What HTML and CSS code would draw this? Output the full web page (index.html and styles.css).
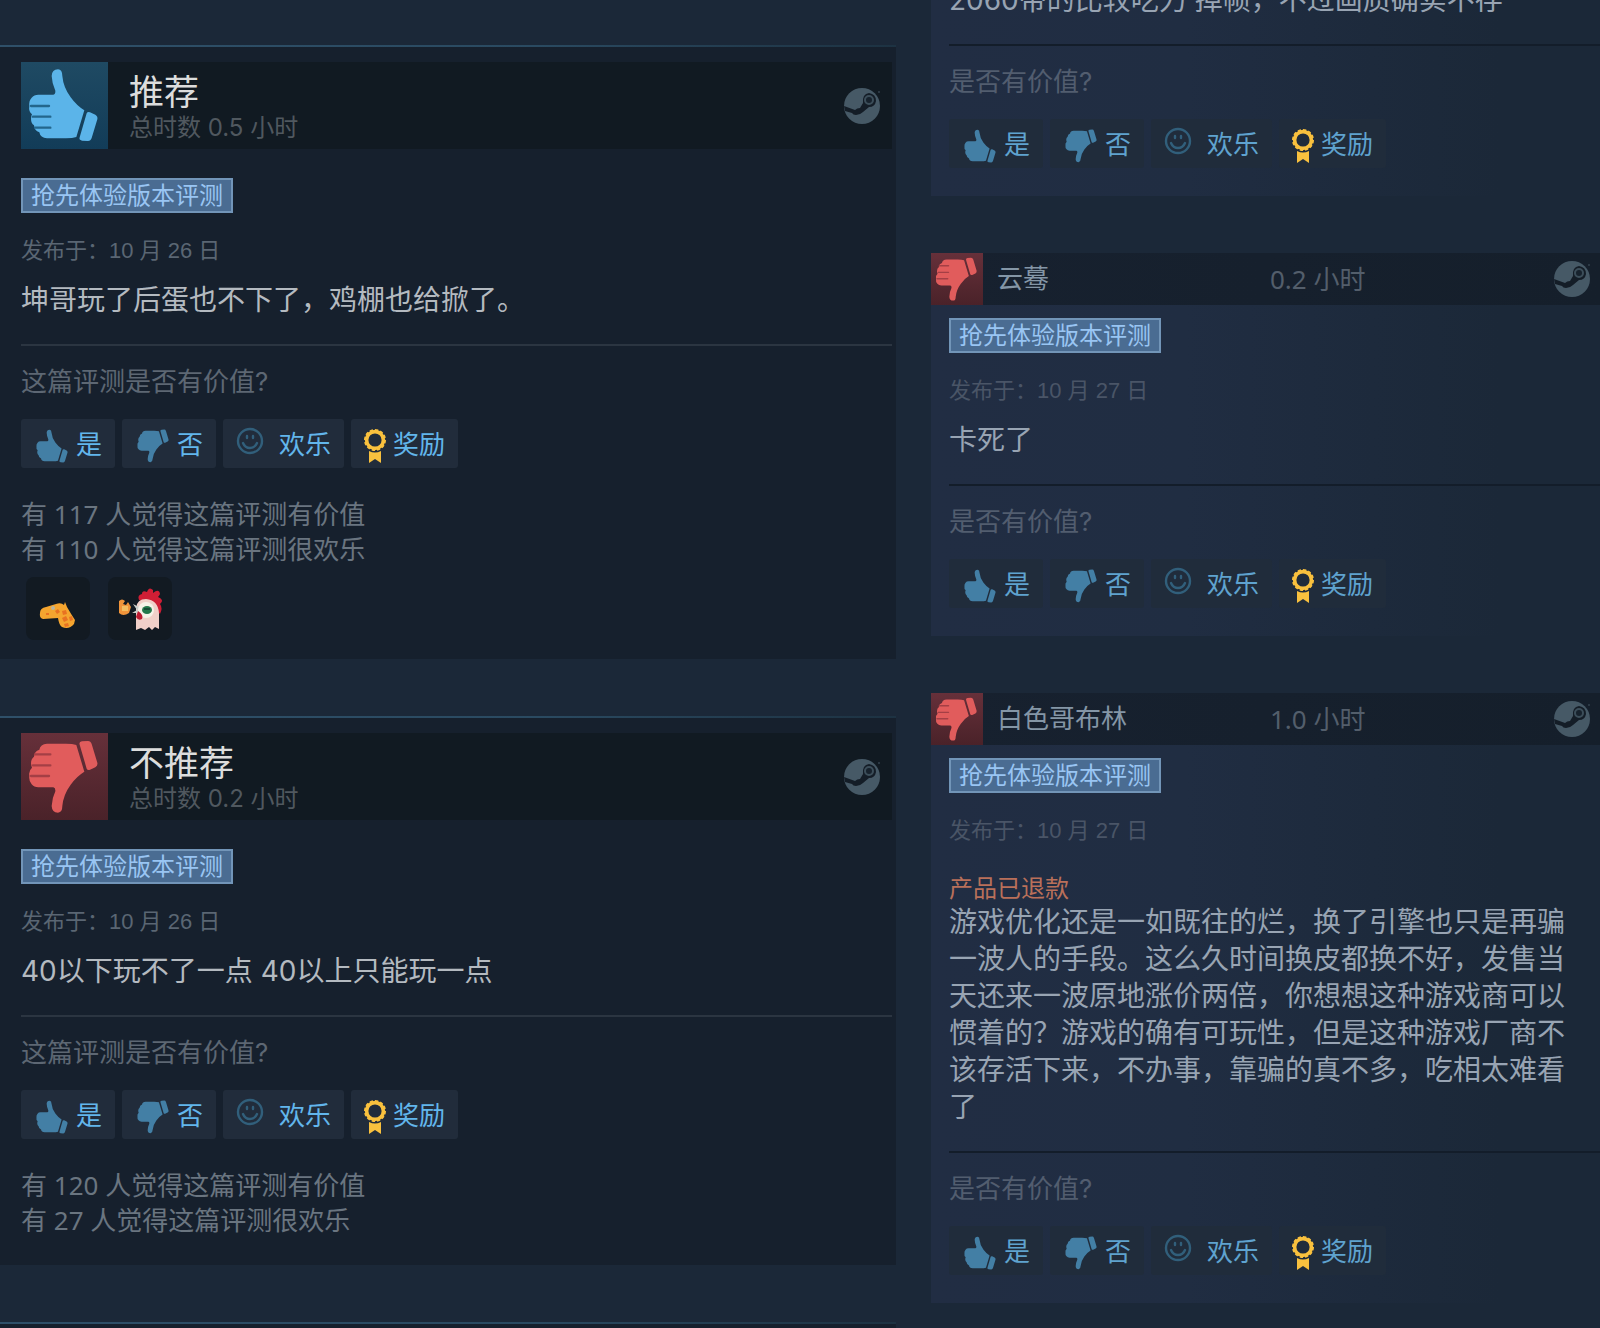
FILE: index.html
```html
<!DOCTYPE html>
<html lang="zh-CN">
<head>
<meta charset="utf-8">
<meta name="viewport" content="width=device-width, initial-scale=1">
<title>用户评测</title>
<link rel="stylesheet" href="styles.css">
</head>
<body>
<svg class="sprite" aria-hidden="true">
  <defs>
    <g id="hand">
      <path d="M92 42Q93 22 111 22Q124 23 124 42Q127 76 149 106Q167 131 190 145L166 225Q155 229 135 229L78 229Q58 228 55 211Q40 206 39 190Q30 184 30 170Q31 160 33 157Q22 148 25 132Q23 116 32 107Q39 98 52 98L97 98Q104 96 103 86Q93 65 92 42Z"/>
      <path d="M197 154Q200 148 207 151L223 158Q231 163 229 172L212 228Q209 237 201 237L183 236Q173 234 176 226Z"/>
      <path class="slit" d="M30 132H84M36 164H88M42 197H88"/>
    </g>
    <symbol id="thumb-up" viewBox="0 0 261 261"><use href="#hand"/></symbol>
    <symbol id="thumb-down" viewBox="0 0 261 261"><use href="#hand" transform="matrix(1 0 0 -1 0 261)"/></symbol>
    <symbol id="small-up" viewBox="22 18 210 222"><use href="#hand"/></symbol>
    <symbol id="small-down" viewBox="22 21 210 222"><use href="#hand" transform="matrix(1 0 0 -1 0 261)"/></symbol>
    <symbol id="smile" viewBox="0 0 28 28">
      <g fill="none" stroke="currentColor" stroke-width="2.4" stroke-linecap="round">
        <circle cx="14" cy="14" r="12"/>
        <path d="M7 16Q9 21 14 21Q19 21 21 16M11 9V11M17 9V11"/>
      </g>
    </symbol>
    <symbol id="medal" viewBox="0 0 24 36">
      <circle cx="12" cy="12" r="8.4" fill="none" stroke="currentColor" stroke-width="3.6"/>
      <circle cx="12" cy="12" r="10" fill="none" stroke="currentColor" stroke-width="2" stroke-dasharray="3.2 2"/>
      <path fill="currentColor" d="M6 23Q12 26 18 23V35L12 31L6 35Z"/>
    </symbol>
    <symbol id="steam" viewBox="0 0 38 38">
      <circle cx="19" cy="19" r="18" fill="#465966"/>
      <path fill="#141d27" d="M1 19L12 23Q14 21 17 21L20 16Q19 7 26 6Q33 7 33 14Q32 20 26 20L20 25Q17 28 13 28Q10 28 9 26L2 24Z"/>
      <circle cx="26" cy="13" r="4" fill="#17222d" stroke="#3c4e5a" stroke-width="2"/>
      <circle cx="36" cy="5" r="1" fill="#33424e"/>
    </symbol>
  </defs>
</svg>
<main class="reviews">
  <section class="column column-main">
    <article class="review review-awarded">
      <header class="verdict">
        <span class="rating rating-up"><svg><use href="#thumb-up"/></svg></span>
        <div class="verdict-text">
          <h2>推荐</h2>
          <p>总时数 0.5 小时</p>
        </div>
        <svg class="steam"><use href="#steam"/></svg>
      </header>
      <span class="badge">抢先体验版本评测</span>
      <p class="date">发布于：10 月 26 日</p>
      <p class="text">坤哥玩了后蛋也不下了，鸡棚也给掀了。</p>
      <hr>
      <p class="question">这篇评测是否有价值?</p>
      <div class="votes">
        <button type="button"><svg class="hand"><use href="#small-up"/></svg>是</button>
        <button type="button"><svg class="hand"><use href="#small-down"/></svg>否</button>
        <button type="button" class="funny"><svg><use href="#smile"/></svg>欢乐</button>
        <button type="button" class="award"><svg><use href="#medal"/></svg>奖励</button>
      </div>
      <p class="counts">有 117 人觉得这篇评测有价值<br>有 110 人觉得这篇评测很欢乐</p>
      <div class="stickers">
        <span class="sticker">
          <svg viewBox="0 0 64 64">
            <path fill="#f5a52f" d="M14 36Q14 31 20 30L30 27Q35 25 38 28L39 25L41 30Q45 37 49 43L48 47Q43 53 36 50Q33 48 32 41L17 42Q13 41 14 36Z"/>
            <path fill="#e87222" d="M29 34l3-2 2 3-3 2zM36 34l4-1 1 4-4 1zM36 41l4-2 2 4-4 2zM43 40l3-1 1 4-3 1zM38 47l4-1 1 3-4 1zM20 36h3v2h-3z"/>
            <circle cx="27" cy="31" r="2" fill="#b9b5a0"/>
          </svg>
        </span>
        <span class="sticker">
          <svg viewBox="0 0 64 64">
            <path fill="#cf1e35" d="M31 23Q29 18 34 17Q34 13 39 15Q41 9 45 13L45 16Q51 11 52 17Q51 19 50 20Q57 23 52 27Q55 31 52 37L46 30Z"/>
            <path fill="#f0d0c9" d="M28 53V31Q29 22 38 22Q50 23 51 36V52L47 50L44 53L41 50L37 53L33 51Z"/>
            <path fill="#c9cdc9" d="M25 27L35 32L32 36L24 36L29 33Z"/>
            <circle cx="38" cy="33" r="8" fill="#f5f2e8"/>
            <ellipse cx="39" cy="33" rx="5" ry="4" fill="#23784c"/>
            <path fill="#164b35" d="M36 31h6v2h-6z"/>
            <path fill="#bd1c32" d="M30 34Q36 38 34 42Q30 44 28 40Z"/>
            <path fill="#f0943a" d="M11 24Q14 21 17 24L15 27L18 28L20 25L23 30L21 36Q15 40 11 36Z"/>
            <path fill="#f4be61" d="M14 29h6v5h-6z"/>
          </svg>
        </span>
      </div>
    </article>

    <article class="review">
      <header class="verdict">
        <span class="rating rating-down"><svg><use href="#thumb-down"/></svg></span>
        <div class="verdict-text">
          <h2>不推荐</h2>
          <p>总时数 0.2 小时</p>
        </div>
        <svg class="steam"><use href="#steam"/></svg>
      </header>
      <span class="badge">抢先体验版本评测</span>
      <p class="date">发布于：10 月 26 日</p>
      <p class="text">40以下玩不了一点 40以上只能玩一点</p>
      <hr>
      <p class="question">这篇评测是否有价值?</p>
      <div class="votes">
        <button type="button"><svg class="hand"><use href="#small-up"/></svg>是</button>
        <button type="button"><svg class="hand"><use href="#small-down"/></svg>否</button>
        <button type="button" class="funny"><svg><use href="#smile"/></svg>欢乐</button>
        <button type="button" class="award"><svg><use href="#medal"/></svg>奖励</button>
      </div>
      <p class="counts">有 120 人觉得这篇评测有价值<br>有 27 人觉得这篇评测很欢乐</p>
    </article>

    <article class="review review-next"></article>
  </section>

  <section class="column column-recent">
    <article class="recent recent-first">
      <p class="text">2060带的比较吃力 掉帧，不过画质确实不存</p>
      <hr>
      <p class="question">是否有价值?</p>
      <div class="votes">
        <button type="button"><svg class="hand"><use href="#small-up"/></svg>是</button>
        <button type="button"><svg class="hand"><use href="#small-down"/></svg>否</button>
        <button type="button" class="funny"><svg><use href="#smile"/></svg>欢乐</button>
        <button type="button" class="award"><svg><use href="#medal"/></svg>奖励</button>
      </div>
    </article>

    <article class="recent">
      <header class="byline">
        <span class="rating rating-down"><svg><use href="#thumb-down"/></svg></span>
        <a class="author" href="#">云蓦</a>
        <span class="hours">0.2 小时</span>
        <svg class="steam"><use href="#steam"/></svg>
      </header>
      <span class="badge">抢先体验版本评测</span>
      <p class="date">发布于：10 月 27 日</p>
      <p class="text">卡死了</p>
      <hr>
      <p class="question">是否有价值?</p>
      <div class="votes">
        <button type="button"><svg class="hand"><use href="#small-up"/></svg>是</button>
        <button type="button"><svg class="hand"><use href="#small-down"/></svg>否</button>
        <button type="button" class="funny"><svg><use href="#smile"/></svg>欢乐</button>
        <button type="button" class="award"><svg><use href="#medal"/></svg>奖励</button>
      </div>
    </article>

    <article class="recent">
      <header class="byline">
        <span class="rating rating-down"><svg><use href="#thumb-down"/></svg></span>
        <a class="author" href="#">白色哥布林</a>
        <span class="hours">1.0 小时</span>
        <svg class="steam"><use href="#steam"/></svg>
      </header>
      <span class="badge">抢先体验版本评测</span>
      <p class="date">发布于：10 月 27 日</p>
      <p class="refund">产品已退款</p>
      <p class="text">游戏优化还是一如既往的烂，换了引擎也只是再骗一波人的手段。这么久时间换皮都换不好，发售当天还来一波原地涨价两倍，你想想这种游戏商可以惯着的？游戏的确有可玩性，但是这种游戏厂商不该存活下来，不办事，靠骗的真不多，吃相太难看了</p>
      <hr>
      <p class="question">是否有价值?</p>
      <div class="votes">
        <button type="button"><svg class="hand"><use href="#small-up"/></svg>是</button>
        <button type="button"><svg class="hand"><use href="#small-down"/></svg>否</button>
        <button type="button" class="funny"><svg><use href="#smile"/></svg>欢乐</button>
        <button type="button" class="award"><svg><use href="#medal"/></svg>奖励</button>
      </div>
    </article>
  </section>
</main>
</body>
</html>
```
FILE: styles.css
```css
* {
  box-sizing: border-box;
}

body {
  margin: 0;
  background: #1b2838;
  color: #b4bac0;
  font-family: Inter, "Noto Sans CJK SC", sans-serif;
  font-size: 26px;
  line-height: 30px;
}

h2,
p {
  margin: 0;
  font-weight: 400;
}

svg {
  display: block;
  flex: none;
}

.sprite {
  position: absolute;
  width: 0;
  height: 0;
}

.slit {
  fill: none;
  stroke: var(--slit, none);
  stroke-width: 7;
  stroke-linecap: round;
}

.reviews {
  display: grid;
  grid-template-columns: minmax(0, 896fr) minmax(0, 669fr);
  column-gap: 35px;
  min-height: 100vh;
  overflow: hidden;
}

.column {
  display: flex;
  flex-direction: column;
  gap: 57px;
}

.column-main {
  padding-top: 45px;
}

/* Featured reviews */

.review {
  padding: 15px 4px 27px 21px;
  border-top: 2px solid;
  border-image: linear-gradient(to right, #2f5069, #2a4a61 60%, #1d3242) 1;
  background: #16202d;
}

.review-awarded {
  padding-bottom: 19px;
}

.review-next {
  flex: 1;
  padding: 0;
  min-height: 6px;
}

.verdict {
  display: flex;
  align-items: center;
  gap: 21px;
  height: 87px;
  padding-right: 11px;
  background: #111a22;
}

.rating {
  display: block;
  flex: none;
  width: 87px;
}

.rating svg {
  width: 100%;
  aspect-ratio: 1;
}

.rating-up {
  --slit: #23668c;
  background: linear-gradient(#1f4a63, #123c58);
  fill: #5bb4e9;
}

.rating-down {
  --slit: #a43f45;
  background: linear-gradient(#66303a, #4a2229);
  fill: #e15c5c;
}

.verdict-text {
  flex: 1;
  padding-top: 7px;
}

.verdict h2 {
  color: #dcdddd;
  font-size: 35px;
  line-height: 36px;
}

.verdict p {
  color: #50585f;
  font-size: 24px;
  line-height: 35px;
}

.steam {
  width: 38px;
  height: 38px;
}

.badge {
  display: block;
  width: fit-content;
  height: 35px;
  margin-top: 29px;
  padding: 0 8px;
  border: 2px solid #7295b8;
  background: #4a6c92;
  color: #99c5f3;
  font-size: 24px;
  line-height: 31px;
}

.date {
  margin-top: 23px;
  color: #5a6673;
  font-family: "Liberation Sans", "Noto Sans CJK SC", sans-serif;
  font-size: 22px;
}

.text {
  margin-top: 16px;
  font-size: 28px;
  line-height: 37px;
}

hr {
  height: 2px;
  margin: 25px 0 21px;
  border: 0;
  background: #2b3541;
}

.question {
  color: #5d6773;
}

.votes {
  display: flex;
  gap: 7px;
  margin-top: 22px;
}

.votes button {
  display: flex;
  align-items: center;
  gap: 8px;
  height: 49px;
  padding: 2px 13px 0 15px;
  border: 0;
  border-radius: 3px;
  background: #212c3b;
  color: #62b6ec;
  font: inherit;
  white-space: nowrap;
}

.votes .hand {
  width: 32px;
  height: 34px;
  margin-top: 2px;
  fill: #437fa5;
}

.votes .funny {
  gap: 15px;
  padding-left: 13px;
}

.funny svg {
  width: 28px;
  height: 28px;
  margin-bottom: 7px;
  color: #315f7b;
}

.votes .award {
  gap: 6px;
  padding-left: 12px;
}

.award svg {
  width: 24px;
  height: 36px;
  margin-top: 2px;
  color: #f9c13e;
}

.counts {
  margin-top: 29px;
  color: #6a7580;
  line-height: 35px;
}

.counts,
.hours {
  font-family: "Noto Sans", "Noto Sans CJK SC", sans-serif;
}

.stickers {
  display: flex;
  gap: 18px;
  margin: 10px 0 0 5px;
}

.sticker {
  width: 64px;
  height: 63px;
  border-radius: 8px;
  background: #121a22;
}

/* Recent reviews */

.recent {
  padding: 0 0 28px 18px;
  background: linear-gradient(to right, #212d43, #202d42 38%, #1b2838 85%);
  color: #98a4b3;
}

.recent-first {
  margin-top: -18px;
}

.recent-first .text {
  margin-top: 0;
}

.byline {
  display: flex;
  align-items: center;
  height: 52px;
  margin-left: -18px;
  padding-right: 9px;
  background: linear-gradient(to right, #17212f, #151f2b);
}

.byline .rating {
  width: 52px;
}

.author {
  width: 287px;
  padding-left: 14px;
  color: #8496a6;
  text-decoration: none;
}

.hours {
  flex: 1;
  color: #535e6b;
}

.recent .badge {
  margin-top: 13px;
}

.recent .date {
  color: #4a5567;
}

.recent .text {
  padding-right: 25px;
}

.refund {
  margin-top: 28px;
  color: #b9705a;
  font-size: 24px;
}

.refund + .text {
  margin-top: 0;
}

.recent hr {
  background: #131d2a;
}

.recent .question {
  color: #525d6f;
}

.recent .votes button {
  background: #202c3b;
  color: #5fa3cf;
}
```
